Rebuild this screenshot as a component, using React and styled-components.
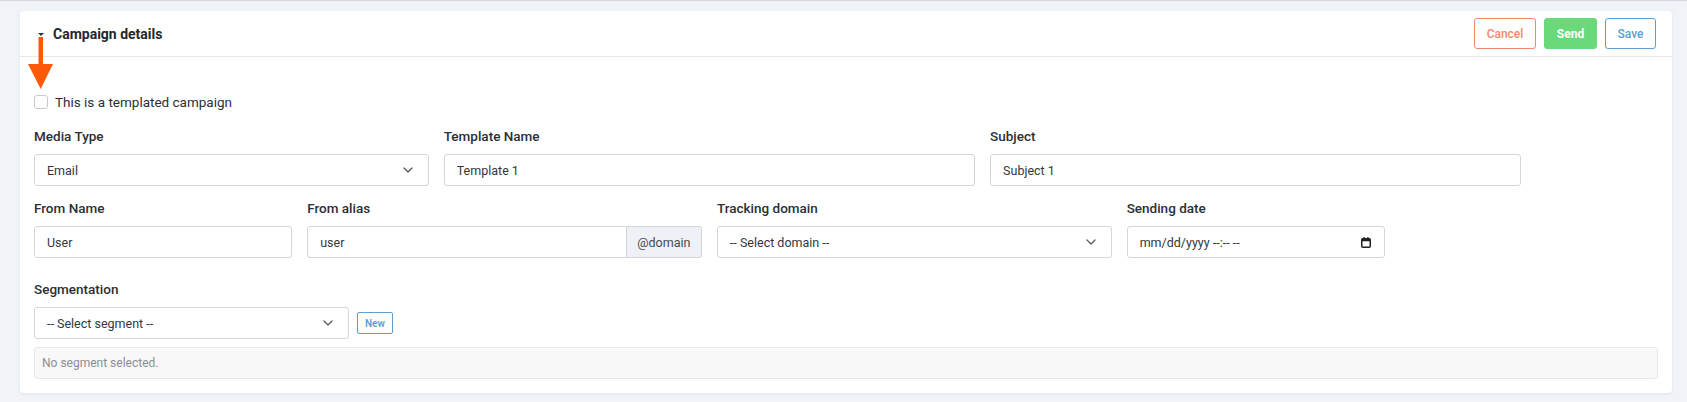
import React from 'react';
import styled, { createGlobalStyle } from 'styled-components';

const GlobalStyle = createGlobalStyle`
  html, body {
    margin: 0;
    padding: 0;
    background: #f0f3f7;
    font-family: Roboto, "Liberation Sans", sans-serif;
    color: #2b2f36;
  }
  body {
    border-top: 1px solid #d3d7dc;
  }
`;

const Page = styled.div`
  padding: 10px 15px 11px 20px;
`;

const Card = styled.section`
  position: relative;
  background: #fff;
  border-radius: 4px;
  box-shadow: 0 1px 3px rgba(30, 40, 60, 0.08);
`;

const Header = styled.div`
  display: flex;
  align-items: center;
  justify-content: space-between;
  height: 45px;
  padding: 0 16px 0 18px;
  border-bottom: 1px solid #e6e8eb;
`;

const TitleWrap = styled.div`
  display: flex;
  align-items: center;
  gap: 9px;
`;

const Caret = styled.span`
  width: 0;
  height: 0;
  border-left: 3px solid transparent;
  border-right: 3px solid transparent;
  border-top: 3px solid #333;
  margin-top: 2px;
`;

const Title = styled.h2`
  margin: 0;
  font-size: 14px;
  font-weight: 700;
  color: #23272e;
`;

const Actions = styled.div`
  display: flex;
  gap: 8px;
`;

const tones = {
  cancel: { bg: '#fff', border: '#f2896c', color: '#f2896c', weight: 500 },
  send: { bg: '#69d97a', border: '#69d97a', color: '#fff', weight: 700 },
  save: { bg: '#fff', border: '#5c9fd0', color: '#5c9fd0', weight: 500 },
};

const Button = styled.button`
  box-sizing: border-box;
  height: 31px;
  padding: 0 8px;
  border-radius: 3px;
  font-family: inherit;
  font-size: 12px;
  font-weight: ${(p) => tones[p.$tone].weight};
  background: ${(p) => tones[p.$tone].bg};
  border: 1px solid ${(p) => tones[p.$tone].border};
  color: ${(p) => tones[p.$tone].color};
  width: ${(p) => p.$w}px;
`;

const Arrow = styled.svg`
  position: absolute;
  left: 8px;
  top: 26px;
`;

const Body = styled.div`
  padding: 35px 14px 14px 14px;
`;

const CheckRow = styled.label`
  display: flex;
  align-items: center;
  gap: 7px;
  height: 20px;
  font-size: 13.5px;
  color: #2b2f36;
  margin-bottom: 14px;
`;

const Box = styled.span`
  width: 12px;
  height: 12px;
  border: 1px solid #c6cad1;
  border-radius: 3px;
  background: #fff;
`;

const Grid = styled.div`
  display: grid;
  grid-template-columns: repeat(12, 1fr);
  column-gap: 15px;
  margin-bottom: ${(p) => p.$gap}px;
`;

const Field = styled.div`
  grid-column: span ${(p) => p.$span};
  display: flex;
  flex-direction: column;
`;

const Label = styled.div`
  font-size: 13.5px;
  font-weight: 500;
  line-height: 20px;
  color: #2b2f36;
  margin-bottom: 8px;
`;

const controlBase = `
  box-sizing: border-box;
  height: 32px;
  border: 1px solid #d3d6db;
  border-radius: 3px;
  background: #fff;
  font-family: inherit;
  font-size: 12.5px;
  color: #333840;
`;

const Input = styled.input`
  ${controlBase}
  width: 100%;
  padding: 0 12px;
  outline: none;
`;

const Select = styled.div`
  ${controlBase}
  width: ${(p) => p.$w || '100%'};
  display: flex;
  align-items: center;
  justify-content: space-between;
  padding: 0 ${(p) => p.$pr || 15}px 0 12px;
`;

const Group = styled.div`
  display: flex;
  height: 32px;
`;

const GroupInput = styled(Input)`
  flex: 1;
  border-radius: 3px 0 0 3px;
`;

const Addon = styled.span`
  box-sizing: border-box;
  display: flex;
  align-items: center;
  width: 75px;
  justify-content: center;
  border: 1px solid #d3d6db;
  border-left: none;
  border-radius: 0 3px 3px 0;
  background: #eef1f5;
  font-size: 12.5px;
  color: #464b53;
`;

const SegRow = styled.div`
  display: flex;
  align-items: center;
  gap: 8px;
  margin-bottom: 8px;
`;

const SmallButton = styled.button`
  height: 22px;
  padding: 0 7px;
  border: 1px solid #5c9fd0;
  border-radius: 2px;
  background: #fff;
  color: #5c9fd0;
  font-family: inherit;
  font-size: 10px;
  font-weight: 600;
`;

const Empty = styled.div`
  box-sizing: border-box;
  height: 32px;
  display: flex;
  align-items: center;
  padding: 0 7px;
  border: 1px solid #e6e7e9;
  border-radius: 3px;
  background: #f8f8f8;
  font-size: 12px;
  color: #8a8f97;
`;

const Chevron = () => (
  <svg width="10" height="6" viewBox="0 0 10 6" fill="none">
    <path d="M1 1l4 4 4-4" stroke="#555a61" strokeWidth="1.3" strokeLinecap="round" strokeLinejoin="round" />
  </svg>
);

const Calendar = () => (
  <svg width="10" height="11" viewBox="0 0 10 11" fill="none">
    <rect x="0.75" y="1.75" width="8.5" height="8.5" rx="1" stroke="#222" strokeWidth="1.5" />
    <rect x="0.75" y="1.75" width="8.5" height="2.5" fill="#222" />
    <rect x="2.5" y="0" width="1.2" height="2" fill="#222" />
    <rect x="6.3" y="0" width="1.2" height="2" fill="#222" />
  </svg>
);

const FakeSelect = ({ value, w }) => (
  <Select $w={w}>
    <span>{value}</span>
    <Chevron />
  </Select>
);

export default function App() {
  return (
    <>
      <GlobalStyle />
      <Page>
        <Card>
          <Header>
            <TitleWrap>
              <Caret />
              <Title>Campaign details</Title>
            </TitleWrap>
            <Actions>
              <Button $tone="cancel" $w={62}>Cancel</Button>
              <Button $tone="send" $w={53}>Send</Button>
              <Button $tone="save" $w={51}>Save</Button>
            </Actions>
          </Header>

          <Arrow width="26" height="52" viewBox="0 0 26 52">
            <rect x="10.5" y="0" width="4.5" height="28" fill="#ff5a0a" />
            <polygon points="0,27 25,27 12.7,52" fill="#ff5a0a" />
          </Arrow>

          <Body>
            <CheckRow>
              <Box />
              This is a templated campaign
            </CheckRow>

            <Grid $gap={12}>
              <Field $span={3}>
                <Label>Media Type</Label>
                <FakeSelect value="Email" />
              </Field>
              <Field $span={4}>
                <Label>Template Name</Label>
                <Input defaultValue="Template 1" />
              </Field>
              <Field $span={4}>
                <Label>Subject</Label>
                <Input defaultValue="Subject 1" />
              </Field>
            </Grid>

            <Grid $gap={21}>
              <Field $span={2}>
                <Label>From Name</Label>
                <Input defaultValue="User" />
              </Field>
              <Field $span={3}>
                <Label>From alias</Label>
                <Group>
                  <GroupInput defaultValue="user" />
                  <Addon>@domain</Addon>
                </Group>
              </Field>
              <Field $span={3}>
                <Label>Tracking domain</Label>
                <FakeSelect value="-- Select domain --" />
              </Field>
              <Field $span={2}>
                <Label>Sending date</Label>
                <Select $pr={13}>
                  <span>mm/dd/yyyy --:-- --</span>
                  <Calendar />
                </Select>
              </Field>
            </Grid>

            <Label>Segmentation</Label>
            <SegRow>
              <FakeSelect value="-- Select segment --" w="315px" />
              <SmallButton>New</SmallButton>
            </SegRow>
            <Empty>No segment selected.</Empty>
          </Body>
        </Card>
      </Page>
    </>
  );
}
